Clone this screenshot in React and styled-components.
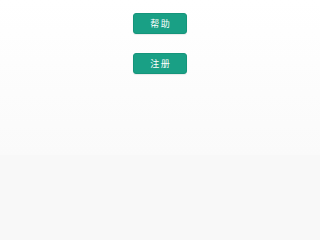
import React from "react";
import styled, { createGlobalStyle } from "styled-components";

const Global = createGlobalStyle`
  html, body { margin: 0; padding: 0; }
  body {
    background: #f8f8f8;
    font-family: "Noto Sans CJK SC", "Noto Sans", sans-serif;
  }
`;

const Page = styled.div`
  width: 100%;
  min-height: 100vh;
  display: flex;
  flex-direction: column;
`;

const Top = styled.div`
  height: 155px;
  background: linear-gradient(#ffffff, #fafafa);
  display: flex;
  flex-direction: column;
  align-items: center;
  padding-top: 13px;
  gap: 19px;
  box-sizing: border-box;
`;

const Bottom = styled.div`
  flex: 1;
  background: #f8f8f8;
`;

const Button = styled.button`
  width: 54px;
  height: 21px;
  background: #19a085;
  border: 1px solid #15957b;
  border-radius: 3px;
  color: #fff;
  font-family: "Noto Sans CJK SC", "Noto Sans", sans-serif;
  font-size: 9px;
  letter-spacing: 1.5px;
  padding: 0 0 0 1.5px;
  display: flex;
  align-items: center;
  justify-content: center;
  box-shadow: 0 1px 1px rgba(0,0,0,0.08);
`;

export default function App() {
  return (
    <>
      <Global />
      <Page>
        <Top>
          <Button>帮助</Button>
          <Button>注册</Button>
        </Top>
        <Bottom />
      </Page>
    </>
  );
}
